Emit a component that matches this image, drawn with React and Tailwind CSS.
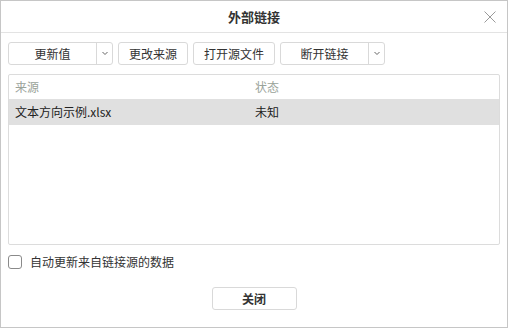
const font = { fontFamily: '"Noto Sans CJK SC", "Noto Sans", sans-serif' };

function Chevron() {
  return (
    <svg width="8" height="5" viewBox="0 0 8 5" fill="none">
      <path d="M1.5 1 L4 3.5 L6.5 1" stroke="#666" strokeWidth="1" />
    </svg>
  );
}

function SplitButton({ label, mainW }) {
  return (
    <div className="flex h-[23px] rounded-[3px] border border-[#d9d9d9] bg-white">
      <div className={`flex items-center justify-center ${mainW} text-[12px] text-[#333]`}>{label}</div>
      <div className="flex w-[16px] items-center justify-center border-l border-[#d9d9d9]">
        <Chevron />
      </div>
    </div>
  );
}

function Button({ label, w }) {
  return (
    <div className={`flex h-[23px] ${w} items-center justify-center rounded-[3px] border border-[#d9d9d9] bg-white text-[12px] text-[#333]`}>
      {label}
    </div>
  );
}

export default function App() {
  return (
    <div style={font} className="flex h-[328px] w-[508px] flex-col border border-[#c6c6c6] bg-white">
      <div className="relative flex h-[32px] shrink-0 items-center justify-center border-b border-[#e3e3e3]">
        <span className="text-[13px] font-bold text-[#333]">外部链接</span>
        <svg className="absolute right-[11px] top-[10px]" width="12" height="12" viewBox="0 0 12 12">
          <path d="M0.5 0.5 L11.5 11.5 M11.5 0.5 L0.5 11.5" stroke="#9a9a9a" strokeWidth="1" />
        </svg>
      </div>
      <div className="flex flex-1 flex-col px-[7px]">
        <div className="mt-[9px] flex gap-[5px]">
          <SplitButton label="更新值" mainW="w-[87px]" />
          <Button label="更改来源" w="w-[70px]" />
          <Button label="打开源文件" w="w-[82px]" />
          <SplitButton label="断开链接" mainW="w-[87px]" />
        </div>
        <div className="mt-[9px] flex h-[171px] flex-col rounded-[2px] border border-[#dcdcdc]">
          <div className="flex h-[24px] items-center px-[6px] text-[12px] text-[#9aa39a]">
            <div className="w-[240px]">来源</div>
            <div>状态</div>
          </div>
          <div className="flex h-[26px] items-center bg-[#e0e0e0] px-[6px] text-[12px] text-[#222]">
            <div className="w-[240px]">文本方向示例.xlsx</div>
            <div>未知</div>
          </div>
        </div>
        <div className="mt-[8px] flex h-[18px] items-center gap-[8px]">
          <div className="h-[14px] w-[14px] rounded-[3px] border border-[#8a8a8a] bg-white" />
          <span className="text-[12px] text-[#333]">自动更新来自链接源的数据</span>
        </div>
        <div className="mt-[16px] flex justify-center">
          <div className="flex h-[23px] w-[85px] items-center justify-center rounded-[3px] border border-[#d9d9d9] bg-white text-[12px] font-bold text-[#333]">
            关闭
          </div>
        </div>
      </div>
    </div>
  );
}
